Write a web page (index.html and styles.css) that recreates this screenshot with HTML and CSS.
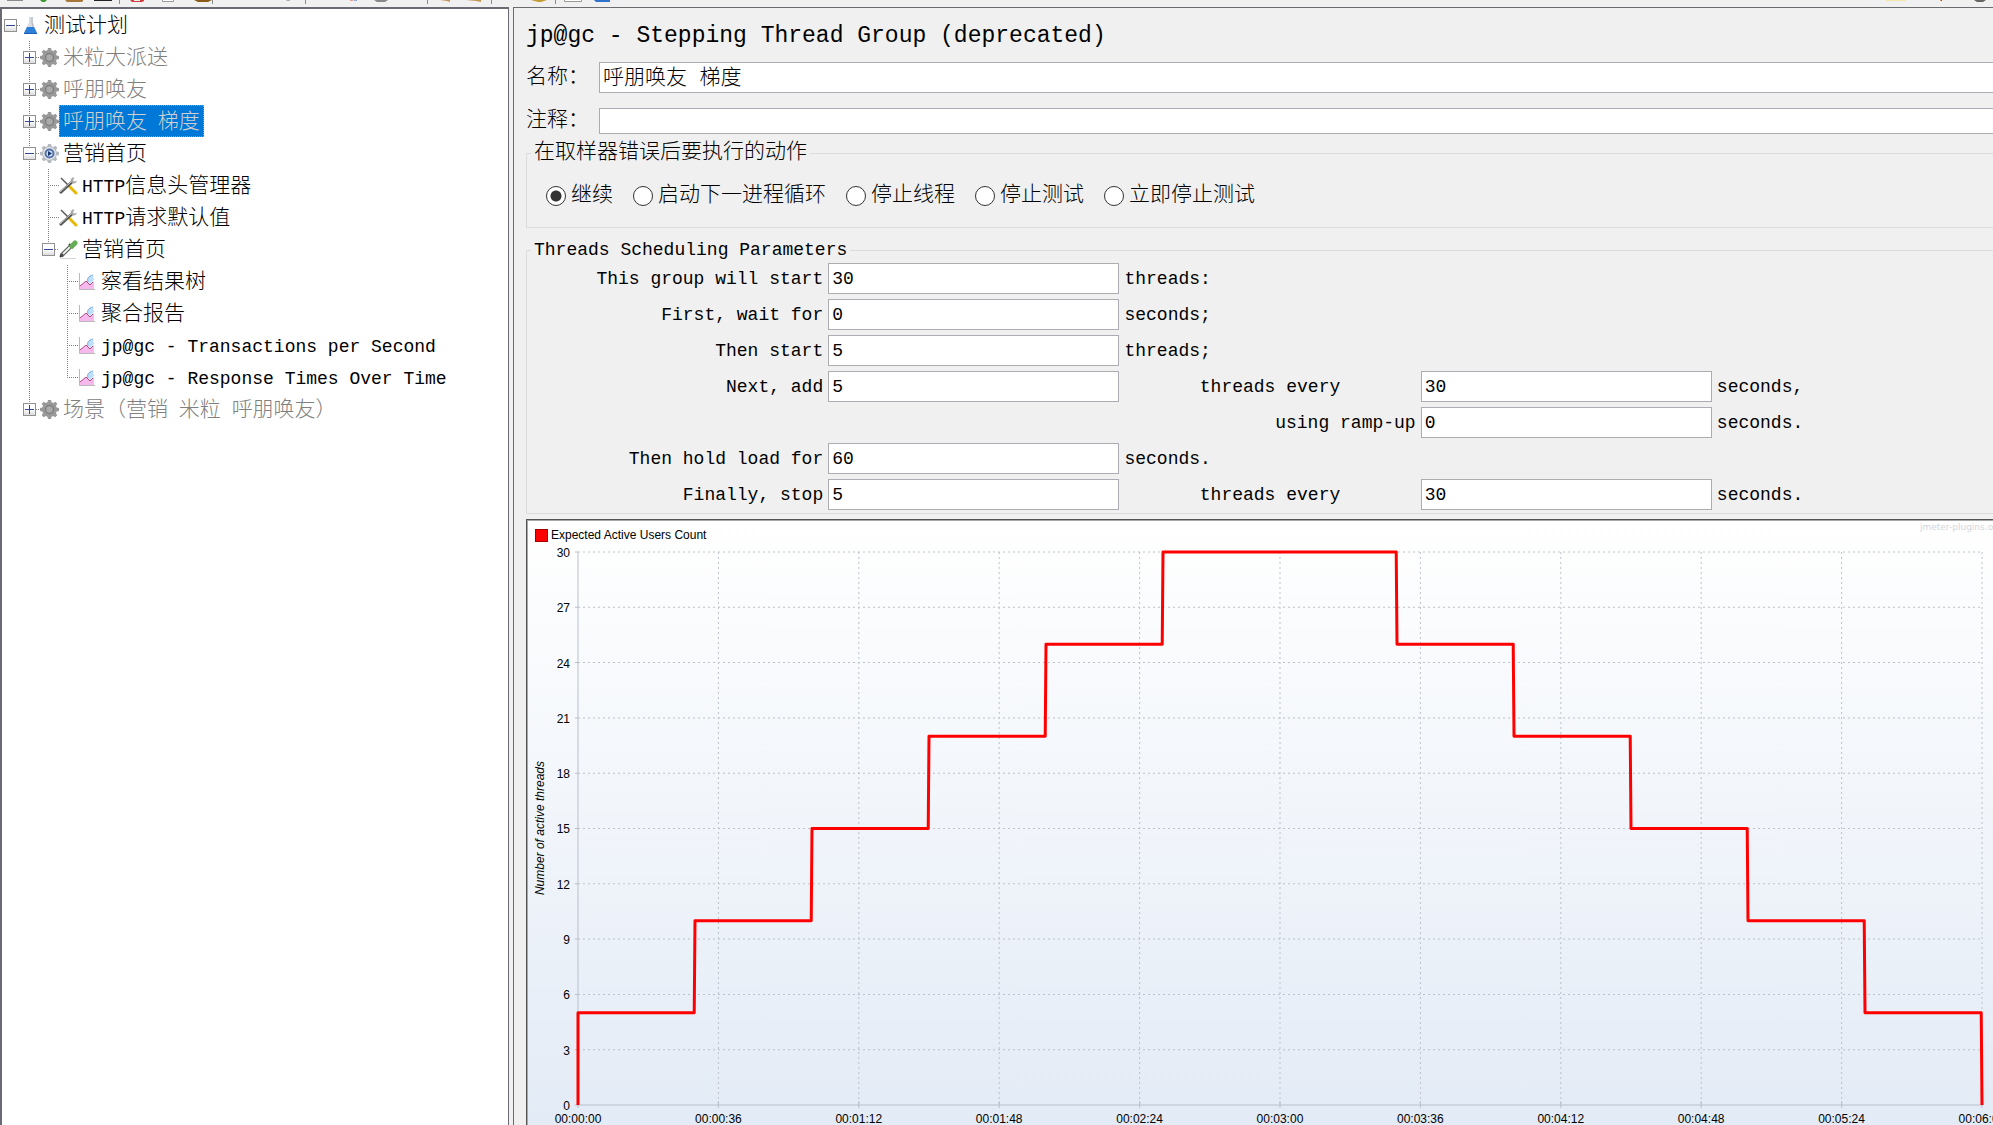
FILE: index.html
```html
<!DOCTYPE html>
<html lang="zh-CN">
<head>
<meta charset="utf-8">
<title>jp@gc - Stepping Thread Group</title>
<link rel="stylesheet" href="styles.css">
</head>
<body>
<svg class="sprites" aria-hidden="true">
  <symbol id="gear" viewBox="0 0 19 19">
    <path d="M8 0h3l.6 2.3 1.6.7L15.300 1.800l2 2L16 5.900l.6 1.500L19 8v3l-2.400.6-.6 1.600 1.200 2-2 2.100-2.100-1.300-1.500.7L11 19H8l-.6-2.300-1.600-.7-2 1.300-2.100-2.100L3 13.200l-.7-1.600L0 11V8l2.300-.6L3 5.900 1.700 3.800l2.100-2L5.800 3l1.600-.7z"/>
  </symbol>
  <symbol id="chart" viewBox="0 0 19 19">
    <path d="M2 17V14L8 9l4 4 4-4v8z" fill="#f6b9ee"/>
    <path d="M15 3C9 4 8 8 10 10l2 2 4-4z" fill="#bfe0fb"/><path d="M15 3C10 4 9 7 10 10" fill="none" stroke="#7aa9e4"/>
    <path d="M2 14 8 9l4 4 3-3" fill="none" stroke="#b8477f" stroke-width="1"/>
    <path d="M1.500 1v16.500H17" fill="none" stroke="#b9b9b9"/>
  </symbol>
  <symbol id="tools" viewBox="0 0 19 19">
    <path d="M2 2 10 10" stroke="#555" stroke-width="1.500"/>
    <path d="M10.500 10.500 17 17" stroke="#e9b800" stroke-width="3" stroke-linecap="round"/>
    <path d="M1 17 13 6" stroke="#555" stroke-width="3"/>
    <path d="M1 16 12 6" stroke="#ccc" stroke-width="1"/>
    <path d="M15.500 1.500C13 1 11 3 12 6c1 2 5 2 6-1l-3 .5-1-1z" fill="#a8a8a8"/>
  </symbol>
  <symbol id="dropper" viewBox="0 0 19 19">
    <path d="M3 15 12 6" stroke="#555" stroke-width="4" stroke-linecap="round"/>
    <path d="M3 15 11 7" stroke="#e8efe8" stroke-width="2"/>
    <path d="M1 17 4 14" stroke="#444" stroke-width="2"/>
    <path d="M10 4 14 8" stroke="#335a33" stroke-width="2"/>
    <path d="M13 6 16 3" stroke="#67ac55" stroke-width="5" stroke-linecap="round"/>
    <path d="M2 18.500H17" stroke="#d5d5d5"/>
  </symbol>
</svg>

<header class="toolbar">
  <svg width="620" height="7" viewBox="0 0 620 7" aria-hidden="true">
    <path d="M7 0h16v1H7z" fill="#8a8a8a"/><path d="M40 0h7l-2 2h-3z" fill="#3f9a35"/>
    <path d="M65 0h18v1l-1 1H67z" fill="#a87838"/><path d="M94 0h18v1H94z" fill="#222"/>
    <path d="M130 0h14v1l-2 1h-10z" fill="#d23b3b"/><path d="M134 0h6v1h-6z" fill="#eee"/>
    <path d="M162.500 0v1.500h11V0" fill="#fff" stroke="#999"/><path d="M194 0h18l-4 2h-10z" fill="#8a5a18"/>
    <path d="M119.500 0v4M212.500 0v4M305.500 0v4M427.500 0v4M491.500 0v4M555.500 0v4" stroke="#8c8c8c"/>
    <path d="M286 0h4v1h-3z" fill="#aaa"/><path d="M350 0h3v1h-3z" fill="#ee9c8c"/><path d="M354 0h3v1h-3z" fill="#8cabe3"/>
    <path d="M374 0h14l-3 2h-8z" fill="#888"/><path d="M440 0h10v2l-3-1z" fill="#c49356"/><path d="M466 0h15v2l-5-1z" fill="#c49356"/>
    <path d="M531 0h16l-6 2h-3z" fill="#c49b2e"/><path d="M564.500 0v1.500h17V0" fill="#fff" stroke="#999"/>
    <path d="M594 0h16v2h-14z" fill="#2f73cd"/>
  </svg>
  <svg width="110" height="7" viewBox="0 0 110 7" aria-hidden="true">
    <path d="M3 0h20v1H3z" fill="#f5e6ac"/><path d="M57 0h1v1h-1z" fill="#e59a5a"/><path d="M58 0h1v1h-1z" fill="#3c5ea8"/>
    <path d="M91 0h12l-3 2h-6z" fill="#666"/>
  </svg>
</header>

<div class="workspace">
  <nav class="tree" aria-label="测试计划">
    <ul class="branch root">
      <li>
        <div class="row"><button class="toggle" aria-label="折叠"></button><span class="lead"></span>
          <svg class="icon" viewBox="0 0 19 19"><path d="M8 1h4v5l4 11q0 1-1 1H4q-1 0-1-1L8 6z" fill="#d9dde2"/><path d="M6 11h7l3 6q0 1-1 1H4q-1 0-1-1z" fill="#2c7fd9"/><path d="M3 17h13v1H3z" fill="#1b5fae"/><path d="M11 1v6l1 4" fill="none" stroke="#aeb4ba"/></svg>
          <span class="label">测试计划</span></div>
        <ul class="branch">
          <li><div class="row off"><button class="toggle plus" aria-label="展开"></button><span class="lead"></span><svg class="icon" viewBox="0 0 19 19"><use href="#gear" fill="#999"/><circle cx="9.500" cy="9.500" r="4" fill="#aaa" stroke="#7f7f7f" stroke-width="1.500"/></svg><span class="label">米粒大派送</span></div></li>
          <li><div class="row off"><button class="toggle plus" aria-label="展开"></button><span class="lead"></span><svg class="icon" viewBox="0 0 19 19"><use href="#gear" fill="#999"/><circle cx="9.500" cy="9.500" r="4" fill="#aaa" stroke="#7f7f7f" stroke-width="1.500"/></svg><span class="label">呼朋唤友</span></div></li>
          <li><div class="row off"><button class="toggle plus" aria-label="展开"></button><span class="lead"></span><svg class="icon" viewBox="0 0 19 19"><use href="#gear" fill="#999"/><circle cx="9.500" cy="9.500" r="4" fill="#aaa" stroke="#7f7f7f" stroke-width="1.500"/></svg><span class="label selected">呼朋唤友<span class="latin"> </span>梯度</span></div></li>
          <li>
            <div class="row"><button class="toggle" aria-label="折叠"></button><span class="lead"></span><svg class="icon" viewBox="0 0 19 19"><use href="#gear" fill="#b4b8bf"/><circle cx="9.500" cy="9.500" r="6.500" fill="#e3e6ea"/><circle cx="9.500" cy="9.500" r="4" fill="#cfe0f7" stroke="#5571a8" stroke-width="2"/><path d="M8 7l4 2.500L8 12z" fill="#16366f"/></svg><span class="label">营销首页</span></div>
            <ul class="branch">
              <li><div class="row"><span class="lead leaf"></span><svg class="icon"><use href="#tools"/></svg><span class="label"><span class="latin">HTTP</span>信息头管理器</span></div></li>
              <li><div class="row"><span class="lead leaf"></span><svg class="icon"><use href="#tools"/></svg><span class="label"><span class="latin">HTTP</span>请求默认值</span></div></li>
              <li>
                <div class="row"><button class="toggle" aria-label="折叠"></button><span class="lead"></span><svg class="icon"><use href="#dropper"/></svg><span class="label">营销首页</span></div>
                <ul class="branch">
                  <li><div class="row"><span class="lead leaf"></span><svg class="icon"><use href="#chart"/></svg><span class="label">察看结果树</span></div></li>
                  <li><div class="row"><span class="lead leaf"></span><svg class="icon"><use href="#chart"/></svg><span class="label">聚合报告</span></div></li>
                  <li><div class="row"><span class="lead leaf"></span><svg class="icon"><use href="#chart"/></svg><span class="label latin">jp@gc - Transactions per Second</span></div></li>
                  <li><div class="row"><span class="lead leaf"></span><svg class="icon"><use href="#chart"/></svg><span class="label latin">jp@gc - Response Times Over Time</span></div></li>
                </ul>
              </li>
            </ul>
          </li>
          <li><div class="row off"><button class="toggle plus" aria-label="展开"></button><span class="lead"></span><svg class="icon" viewBox="0 0 19 19"><use href="#gear" fill="#999"/><circle cx="9.500" cy="9.500" r="4" fill="#aaa" stroke="#7f7f7f" stroke-width="1.500"/></svg><span class="label">场景（营销<span class="latin"> </span>米粒<span class="latin"> </span>呼朋唤友）</span></div></li>
        </ul>
      </li>
    </ul>
  </nav>

  <main class="editor">
    <h1>jp@gc - Stepping Thread Group (deprecated)</h1>
    <div class="field"><label for="name">名称：</label><input id="name" type="text" value="呼朋唤友 梯度"></div>
    <div class="field comment"><label for="comment">注释：</label><input id="comment" type="text"></div>

    <fieldset class="actions">
      <legend>在取样器错误后要执行的动作</legend>
      <div class="choices">
        <label><input type="radio" name="onerror" checked>继续</label>
        <label><input type="radio" name="onerror">启动下一进程循环</label>
        <label><input type="radio" name="onerror">停止线程</label>
        <label><input type="radio" name="onerror">停止测试</label>
        <label><input type="radio" name="onerror">立即停止测试</label>
      </div>
    </fieldset>

    <fieldset class="schedule">
      <legend class="latin">Threads Scheduling Parameters</legend>
      <div class="params latin">
        <label class="before" for="start">This group will start</label><input id="start" type="text" value="30"><span class="unit">threads:</span>
        <label class="before" for="wait">First, wait for</label><input id="wait" type="text" value="0"><span class="unit">seconds;</span>
        <label class="before" for="then">Then start</label><input id="then" type="text" value="5"><span class="unit">threads;</span>
        <label class="before" for="add">Next, add</label><input id="add" type="text" value="5"><label class="middle" for="every">threads every</label><input id="every" type="text" value="30"><span class="unit">seconds,</span>
        <label class="before ramp" for="ramp">using ramp-up</label><input id="ramp" type="text" value="0"><span class="unit">seconds.</span>
        <label class="before" for="hold">Then hold load for</label><input id="hold" type="text" value="60"><span class="unit">seconds.</span>
        <label class="before" for="stop">Finally, stop</label><input id="stop" type="text" value="5"><label class="middle" for="stopevery">threads every</label><input id="stopevery" type="text" value="30"><span class="unit">seconds.</span>
      </div>
    </fieldset>

    <section class="graph" aria-label="Expected Active Users Count">
      <div class="legend"><span class="swatch"></span><span>Expected Active Users Count</span><span class="credit">jmeter-plugins.org</span></div>
      <div class="axis-title"><span>Number of active threads</span></div>
      <div class="y-axis"><span>30</span><span>27</span><span>24</span><span>21</span><span>18</span><span>15</span><span>12</span><span>9</span><span>6</span><span>3</span><span>0</span></div>
      <svg class="plot" viewBox="0 0 360 30" preserveAspectRatio="none">
        <g class="grid">
          <path d="M0 0H360M0 3H360M0 6H360M0 9H360M0 12H360M0 15H360M0 18H360M0 21H360M0 24H360M0 27H360"/>
          <path d="M36 0V30M72 0V30M108 0V30M144 0V30M180 0V30M216 0V30M252 0V30M288 0V30M324 0V30M360 0V30"/>
        </g>
        <path class="axis" d="M0 0V30H360M-.8 0H0M-.8 3H0M-.8 6H0M-.8 9H0M-.8 12H0M-.8 15H0M-.8 18H0M-.8 21H0M-.8 24H0M-.8 27H0M-.8 30H0"/>
        <path class="axis" d="M0 29.800V30.160M36 29.800V30.160M72 29.800V30.160M108 29.800V30.160M144 29.800V30.160M180 29.800V30.160M216 29.800V30.160M252 29.800V30.160M288 29.800V30.160M324 29.800V30.160M360 29.800V30.160"/>
        <path class="series" d="M0 30V25H29.800L30 20H59.800L60 15H89.800L90 10H119.800L120 5H149.800L150 0H209.800L210 5H239.800L240 10H269.800L270 15H299.800L300 20H329.800L330 25H359.800L360 30"/>
      </svg>
      <div class="x-axis"><span>00:00:00</span><span>00:00:36</span><span>00:01:12</span><span>00:01:48</span><span>00:02:24</span><span>00:03:00</span><span>00:03:36</span><span>00:04:12</span><span>00:04:48</span><span>00:05:24</span><span>00:06:00</span></div>
    </section>
  </main>
</div>
</body>
</html>
```
FILE: styles.css
```css
* { box-sizing: border-box; }

body {
  margin: 0;
  height: 100vh;
  display: flex;
  flex-direction: column;
  overflow: hidden;
  background: #f0f0f0;
  color: #000;
  font: 21px/32px "Liberation Mono", "Noto Sans CJK SC", monospace;
  font-weight: 300;
}

.sprites { position: absolute; width: 0; height: 0; }
.latin { font-size: 18px; white-space: pre; }

.toolbar { display: flex; justify-content: space-between; height: 7px; flex: none; }

.workspace {
  flex: 1;
  min-height: 0;
  display: grid;
  grid-template-columns: 509px 1fr;
  gap: 4px;
}

/* Test plan tree */
.tree {
  background: #fff;
  border: solid #6a6b72;
  border-width: 2px 1px 0 2px;
  overflow: hidden;
}
.branch { list-style: none; margin: 0 0 0 19px; padding: 0; }
.branch.root { margin-left: 8px; }
.branch li {
  background: repeating-linear-gradient(#808080 0 1px, transparent 1px 2px) no-repeat;
  background-size: 1px 100%;
}
.branch li:last-child { background-size: 1px 16px; }
.branch.root > li { background: none; }
.row { display: flex; align-items: center; height: 32px; white-space: nowrap; }
.off { color: #808080; }
.toggle {
  width: 13px;
  height: 13px;
  margin: 0 0 0 -6px;
  padding: 0;
  border: 1px solid #919191;
  background:
    linear-gradient(#34479a, #34479a) center / 9px 1px no-repeat,
    linear-gradient(#fff 50%, #dcdcdc);
}
.toggle.plus {
  background:
    linear-gradient(#34479a, #34479a) center / 9px 1px no-repeat,
    linear-gradient(#34479a, #34479a) center / 1px 9px no-repeat,
    linear-gradient(#fff 50%, #dcdcdc);
}
.lead {
  width: 4px;
  height: 1px;
  background: repeating-linear-gradient(90deg, #808080 0 1px, transparent 1px 2px);
}
.lead.leaf { width: 11px; }
.icon { width: 19px; height: 19px; flex: none; }
.label { height: 32px; padding: 2px 4px 0; }
.label.selected {
  padding: 1px 3px 0;
  border: 1px dotted #f08728;
  background: #0078d7;
  color: #d0d0d0;
}

/* Element editor */
.editor {
  display: flex;
  flex-direction: column;
  min-width: 0;
  border: solid #6a6b6e;
  border-width: 1px 0 0 1px;
  padding-left: 12px;
  overflow: hidden;
}
h1 { margin: 12px 0 10px; font-size: 23px; line-height: 32px; font-weight: 400; white-space: nowrap; }
.field { display: flex; align-items: center; margin-bottom: 15px; }
.field label { width: 73px; line-height: 30px; white-space: nowrap; }
input[type="text"] {
  min-width: 0;
  height: 31px;
  padding: 0 3px;
  border: 1px solid #abadb3;
  border-radius: 0;
  background: #fff;
  color: #000;
  font: inherit;
}
.field input { flex: 1; padding: 2px 3px 0; border-right: 0; }
.field.comment { height: 26px; margin-bottom: 6px; }
.field.comment input { height: 26px; }

fieldset { min-width: 0; margin: 0; padding: 0; border: 1px solid #dcdcdc; border-right: 0; }
legend { margin-left: 4px; padding: 0 3px; line-height: 26px; }
.actions { height: 88px; }
.choices { display: flex; gap: 20px; padding: 14px 0 0 19px; white-space: nowrap; }
.choices label { display: flex; align-items: center; gap: 5px; height: 32px; }
input[type="radio"] {
  appearance: none;
  width: 20px;
  height: 20px;
  margin: 0;
  border: 1px solid #333;
  border-radius: 50%;
  background: #fff;
}
input[type="radio"]:checked { background: radial-gradient(circle, #333 5px, #fff 6px); }

.schedule { margin: 9px 0 5px; }
.params {
  display: grid;
  grid-template-columns: 30fr 29fr 30fr 29fr 28fr;
  grid-auto-rows: 31px;
  gap: 5px 0;
  align-items: center;
  padding-bottom: 3px;
}
.before { grid-column: 1; padding-right: 5px; text-align: right; }
.before.ramp { grid-column: 3; }
.middle { text-align: center; }
.unit { padding-left: 5px; }

/* Load graph */
.graph {
  flex: 1;
  min-height: 0;
  display: grid;
  grid-template-columns: 24px 26px 1fr 11px;
  grid-template-rows: 31px 1fr 20px;
  border: 2px groove #a8a8a8;
  border-right: 0;
  border-bottom: 0;
  background: linear-gradient(#fff, #e3ebf6);
  font: 12px/14px "Liberation Sans", sans-serif;
}
.legend { grid-column: 1 / -1; display: flex; height: 28px; align-items: center; padding-left: 7px; gap: 3px; white-space: nowrap; }
.swatch { width: 13px; height: 13px; border: 1px solid #a80000; background: #f00; }
.credit { width: 73px; margin-left: auto; align-self: flex-start; color: #d3d6dc; font: 9px/12px "DejaVu Sans", sans-serif; }
.axis-title { display: flex; align-items: center; justify-content: center; font-style: italic; }
.axis-title span { writing-mode: vertical-rl; rotate: 180deg; }
.y-axis { display: flex; flex-direction: column; justify-content: space-between; align-items: flex-end; padding-right: 8px; }
.y-axis span { height: 0; line-height: 2px; }
.plot { width: 100%; height: 100%; overflow: visible; }
.plot path { vector-effect: non-scaling-stroke; fill: none; }
.grid { stroke: #bcc1ca; stroke-dasharray: 2 3; shape-rendering: crispEdges; }
.axis { stroke: #b9c0cc; shape-rendering: crispEdges; }
.series { stroke: #f00; stroke-width: 3px; stroke-linejoin: round; }
.x-axis { grid-column: 3; display: flex; justify-content: space-between; padding-top: 7px; }
.x-axis span { width: 0; display: flex; justify-content: center; }
```
